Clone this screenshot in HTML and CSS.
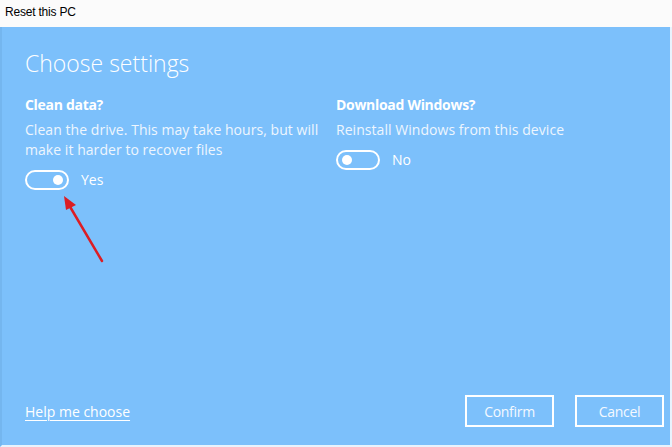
FILE: index.html
```html
<!DOCTYPE html>
<html lang="en">
<head>
<meta charset="utf-8">
<title>Reset this PC</title>
<link rel="stylesheet" href="styles.css">
</head>
<body>
<div class="window">
  <div class="titlebar">Reset this PC</div>
  <div class="panel">
    <h1 class="heading">Choose settings</h1>
    <div class="columns">
      <div class="col col-left">
        <div class="label">Clean data?</div>
        <div class="desc">Clean the drive. This may take hours, but will make it harder to recover files</div>
        <div class="toggle-row">
          <span class="toggle on"><span class="knob"></span></span>
          <span class="state">Yes</span>
        </div>
      </div>
      <div class="col col-right">
        <div class="label">Download Windows?</div>
        <div class="desc">Reinstall Windows from this device</div>
        <div class="toggle-row">
          <span class="toggle off"><span class="knob"></span></span>
          <span class="state">No</span>
        </div>
      </div>
    </div>
    <div class="footer">
      <a class="help" href="#">Help me choose</a>
      <div class="buttons">
        <button class="btn">Confirm</button>
        <button class="btn">Cancel</button>
      </div>
    </div>
    <svg class="arrow" width="60" height="80" viewBox="0 0 60 80">
      <line x1="50" y1="73" x2="17" y2="17" stroke="#dc1d24" stroke-width="2.5" stroke-linecap="round"/>
      <polygon points="12,8 24,17 14,22" fill="#dc1d24"/>
    </svg>
  </div>
</div>
</body>
</html>
```
FILE: styles.css
```css
html, body {
  margin: 0;
  padding: 0;
  background: #ffffff;
}
body {
  font-family: "Open Sans", "Noto Sans", "Liberation Sans", sans-serif;
}
.window {
  width: 672px;
  height: 447px;
  display: flex;
  flex-direction: column;
}
.titlebar {
  height: 27px;
  box-sizing: border-box;
  padding: 5px 0 0 5px;
  font-size: 12px;
  color: #000;
  font-family: "Liberation Sans", "DejaVu Sans", sans-serif;
  background: #fbfbfb;
  letter-spacing: -0.2px;
}
.panel {
  position: relative;
  flex: 1;
  background: #7cc0fb;
  border-left: 2px solid #74b6ef;
  border-right: 2px solid #e8f3fd;
  border-bottom: 2px solid #e8f3fd;
  padding: 0 0 0 23px;
  display: flex;
  flex-direction: column;
  color: #ffffff;
}
.heading {
  margin: 21px 0 0 0;
  font-weight: 300;
  font-size: 23px;
  line-height: 30px;
  color: #ffffff;
}
.columns {
  display: flex;
  margin-top: 17px;
}
.col-left {
  width: 311px;
}
.col-right {
  width: 320px;
}
.label {
  font-weight: 700;
  font-size: 14px;
  line-height: 20px;
  letter-spacing: -0.3px;
}
.desc {
  font-size: 14px;
  line-height: 20px;
  margin-top: 5px;
  color: #eef6fe;
  letter-spacing: 0.05px;
}
.col-left .desc {
  width: 305px;
}
.toggle-row {
  display: flex;
  align-items: center;
  margin-top: 10px;
}
.toggle {
  width: 44px;
  height: 20px;
  box-sizing: border-box;
  border: 2px solid #ffffff;
  border-radius: 10px;
  display: flex;
  align-items: center;
  padding: 0 4px;
}
.toggle.on {
  justify-content: flex-end;
}
.toggle.off {
  justify-content: flex-start;
}
.knob {
  width: 10px;
  height: 10px;
  border-radius: 50%;
  background: #ffffff;
}
.state {
  margin-left: 12px;
  font-size: 14px;
  line-height: 20px;
}
.footer {
  margin-top: auto;
  margin-bottom: 18px;
  display: flex;
  align-items: center;
  justify-content: space-between;
  padding-right: 6px;
}
.help {
  color: #ffffff;
  font-size: 14px;
  text-decoration: underline;
  text-underline-offset: 3px;
}
.buttons {
  display: flex;
  gap: 21px;
}
.btn {
  width: 89px;
  height: 32px;
  box-sizing: border-box;
  border: 2px solid #ffffff;
  background: transparent;
  color: #f4f9ff;
  font-family: "Open Sans", "Noto Sans", sans-serif;
  font-size: 14px;
  padding: 0;
  letter-spacing: -0.3px;
}
.arrow {
  position: absolute;
  left: 50px;
  top: 161px;
}
```
